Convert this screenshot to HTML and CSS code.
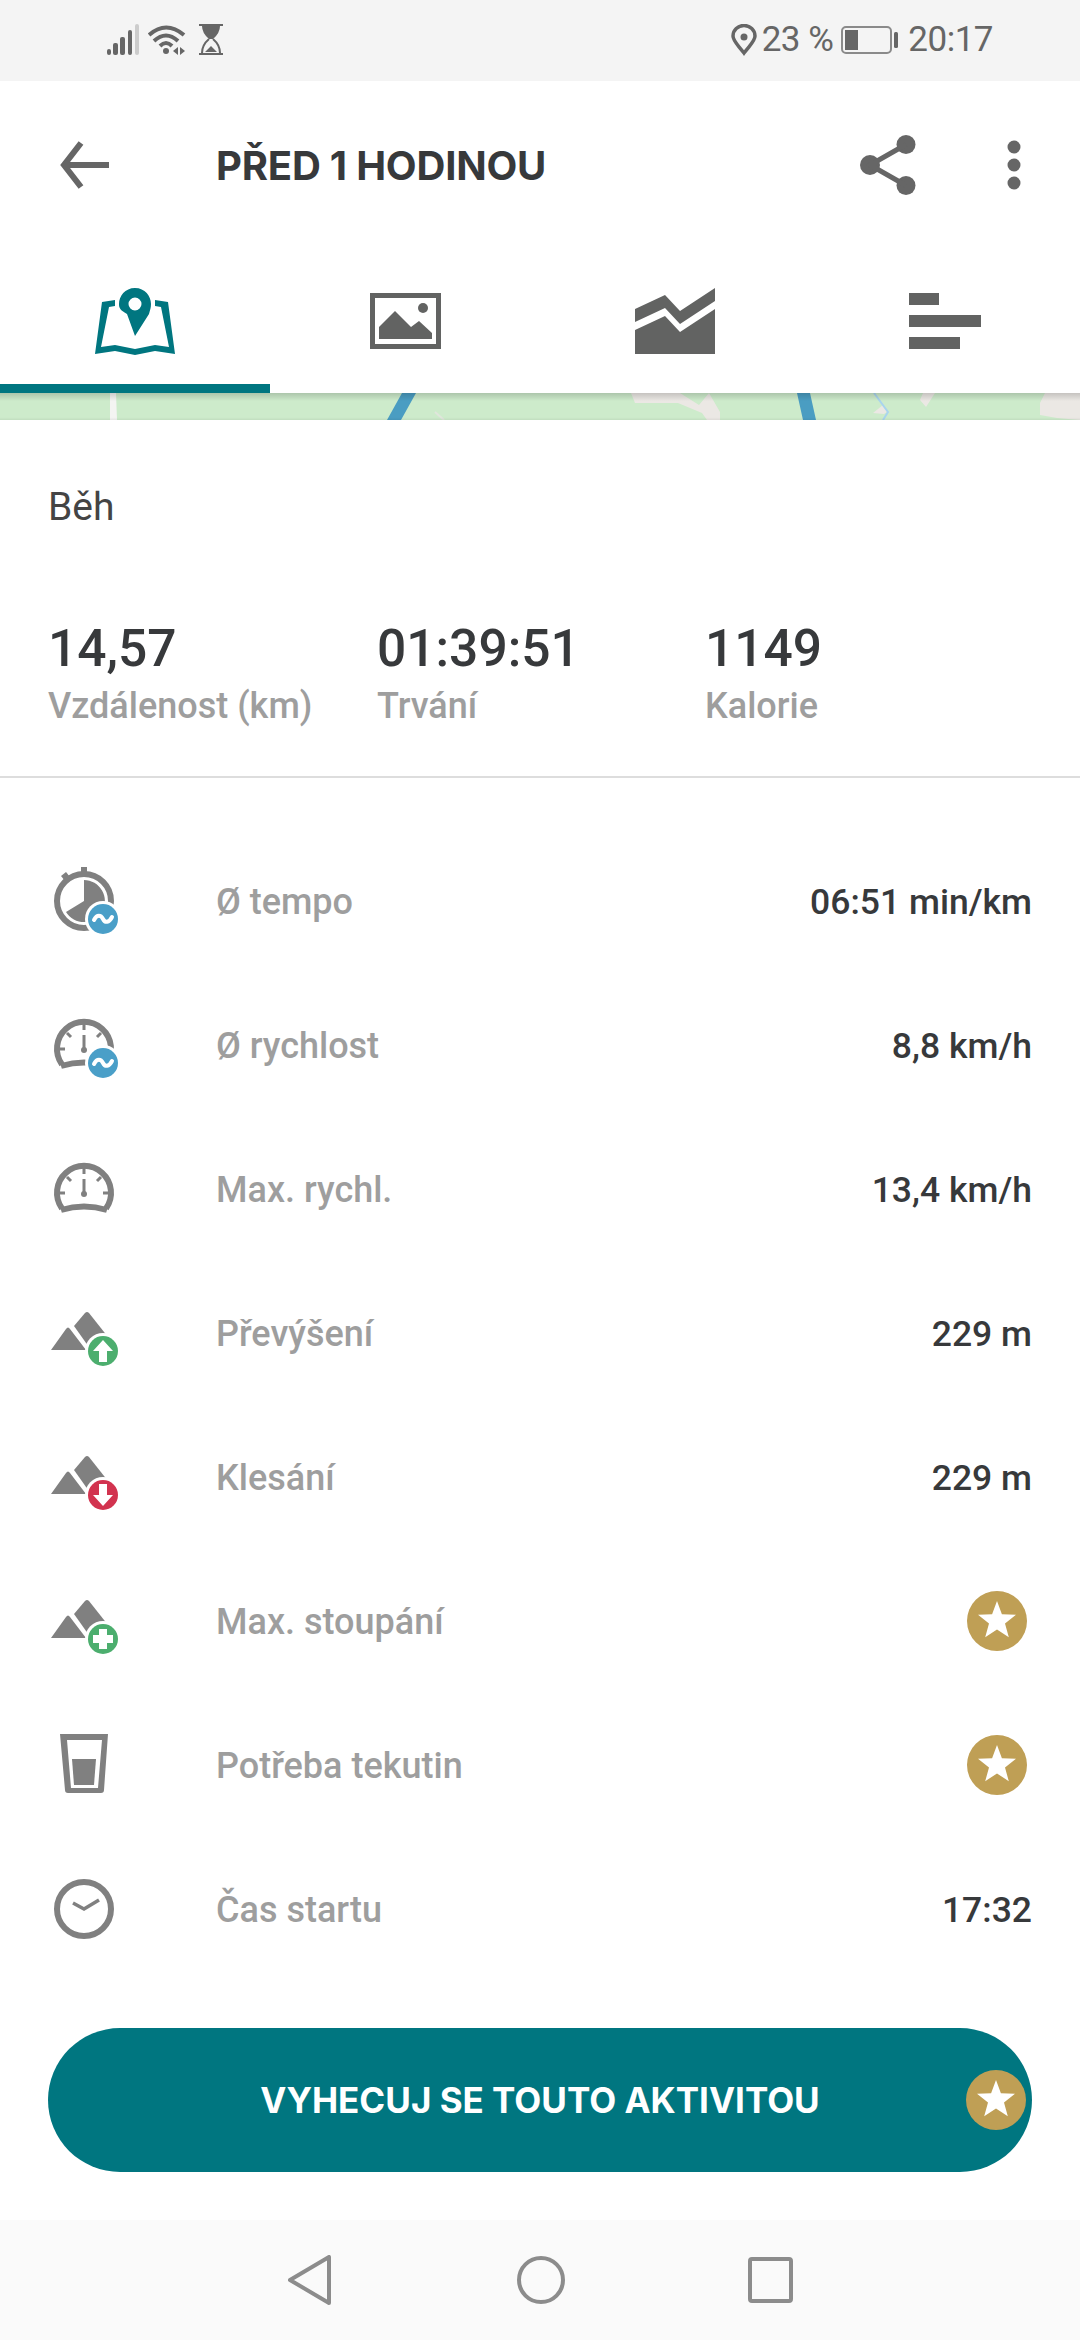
FILE: index.html
```html
<!DOCTYPE html>
<html lang="cs">
<head>
  <meta charset="UTF-8" />
  <meta name="viewport" content="width=device-width, initial-scale=1" />
  <title>Před 1 hodinou</title>
  <link rel="stylesheet" href="styles.css">
</head>
<body>
<svg class="defs" width="0" height="0">
  <symbol id="star" viewBox="-30 -30 60 60">
    <circle r="30" fill="#bf9f55"/>
    <polygon fill="#fff" points="0,-20 4.9,-6.7 19,-6.2 8,2.6 11.8,16.2 0,8.4 -11.8,16.2 -8,2.6 -19,-6.2 -4.9,-6.7"/>
  </symbol>
  <symbol id="peaks" viewBox="0 0 72 72">
    <path fill="#808080" d="M3 53 L18 32 Q20 29 22 32 L38 53 Z"/>
    <path fill="#808080" d="M26 29 L37 16 Q39 14 41 16 L60 40 L43 53 Z"/>
  </symbol>
  <symbol id="gauge" viewBox="0 0 72 72">
    <g fill="none" stroke="#808080">
      <path stroke-width="6" d="M14 55.5 A27 27 0 1 1 58 55.5"/>
      <path stroke-width="6" d="M13 57 Q36 50 59 57"/>
      <path stroke-width="3" d="M36 15 V21 M12 40 H17 M55 40 H60 M19 24 L23 28 M53 24 L49 28 M36 26 V40"/>
    </g>
    <circle cx="36" cy="41" r="3" fill="#808080"/>
  </symbol>
  <symbol id="wave" viewBox="0 0 72 72">
    <circle cx="55" cy="54" r="18" fill="#fff"/>
    <circle cx="55" cy="54" r="15" fill="#4a9fc8"/>
    <path fill="none" stroke="#fff" stroke-width="4" stroke-linecap="round" d="M46 55 C49 49 53 50 55 54 S61 58 64 52"/>
  </symbol>
</svg>

<div class="status">
  <div class="status-left">
    <svg width="32" height="32" viewBox="0 0 32 32">
      <g fill="#666"><rect x="0" y="25" width="4" height="6" rx="2"/><rect x="6" y="19" width="5" height="12" rx="2"/><rect x="13" y="13" width="5" height="18" rx="2"/><rect x="21" y="6" width="4" height="25" rx="2"/></g>
      <rect x="28" y="0" width="4" height="31" rx="2" fill="#ccc"/>
    </svg>
    <svg width="38" height="32" viewBox="0 0 38 32">
      <g fill="none" stroke="#666" stroke-width="4">
        <path d="M1 11 Q18 -4 36 11"/>
        <path d="M6 17 Q18 6 30 17"/>
        <path d="M12 22 Q18 16 24 22"/>
      </g>
      <circle cx="18" cy="27" r="3" fill="#666"/>
      <path fill="#666" d="M25 27 L30 23 V31 Z M32 23 L37 27 L32 31 Z"/>
    </svg>
    <svg width="24" height="31" viewBox="0 0 24 31">
      <path fill="#666" d="M0 0 H24 V2 H21 Q21 9 14 15 H10 Q3 9 3 2 H0 Z M0 29 H24 V31 H0 Z M6 28 L12 22 L18 28 Z"/>
      <path fill="none" stroke="#666" stroke-width="2" d="M10 15 Q3 21 3 29 M14 15 Q21 21 21 29"/>
    </svg>
  </div>
  <div class="status-right">
    <svg class="pin" width="26" height="32" viewBox="0 0 26 32">
      <path fill="none" stroke="#666" stroke-width="3.5" d="M13 29 C7 21 2 17 2 12 A11 10.500 0 0 1 24 12 C24 17 19 21 13 29 Z"/>
      <circle cx="13" cy="13" r="3.500" fill="#666"/>
    </svg>
    <span class="status-text">23 %</span>
    <svg class="battery" width="57" height="28" viewBox="0 0 57 28">
      <rect x="1" y="1" width="49" height="26" rx="4" fill="none" stroke="#8a8a8a" stroke-width="2"/>
      <rect x="4" y="4" width="13" height="20" fill="#666"/>
      <rect x="53" y="6" width="4" height="16" rx="1.500" fill="#666"/>
    </svg>
    <span class="status-text">20:17</span>
  </div>
</div>

<header class="topbar">
  <svg class="back" width="50" height="50" viewBox="0 0 50 50">
    <path fill="none" stroke="#666" stroke-width="6" d="M49 25 H4 M21 3 L4 25 L21 47"/>
  </svg>
  <h1>PŘED 1 HODINOU</h1>
  <svg class="share" width="56" height="60" viewBox="0 0 56 60">
    <g fill="#666"><circle cx="10" cy="30" r="10"/><circle cx="46" cy="9.500" r="9.500"/><circle cx="46" cy="50.500" r="9.500"/></g>
    <path fill="none" stroke="#666" stroke-width="5" d="M46 9.500 L10 30 L46 50.500"/>
  </svg>
  <svg class="more" width="14" height="50" viewBox="0 0 14 50">
    <g fill="#666"><circle cx="7" cy="7" r="6.500"/><circle cx="7" cy="25" r="6.500"/><circle cx="7" cy="43" r="6.500"/></g>
  </svg>
</header>

<nav class="tabs">
  <div class="tab active">
    <svg width="80" height="67" viewBox="0 0 80 67">
      <path fill="#007680" d="M7 14 L20 12 V18 L14 19 L6 59 L20 57 L40 61 L60 57 L74 59 L66 19 L60 18 V12 L73 14 L80 66 L60 63 L40 67 L20 63 L0 66 Z"/>
      <path fill="#007680" fill-rule="evenodd" d="M40 0 C50 0 56 8 56 16 C56 20 55 22 54 26 L40 48 L32 26 C25 22 24 20 24 16 C24 8 30 0 40 0 Z M40 9.500 A6.500 6.500 0 1 0 40 22.500 A6.500 6.500 0 1 0 40 9.500 Z"/>
    </svg>
  </div>
  <div class="tab">
    <svg width="71" height="56" viewBox="0 0 71 56">
      <path fill="#626362" fill-rule="evenodd" d="M0 0 H71 V56 H0 Z M5 5 V51 H66 V5 Z"/>
      <path fill="#626362" d="M9 34 L25 18 L41 34 L49 28 L62 40 V46 H9 Z"/>
      <circle cx="53" cy="15" r="5" fill="#626362"/>
    </svg>
  </div>
  <div class="tab">
    <svg width="80" height="66" viewBox="0 0 80 66">
      <path fill="#626362" d="M0 21 L30 7 L45 23 L80 0 V13 L45 36 L30 20 L0 34 Z"/>
      <path fill="#626362" d="M0 42 L30 28 L45 44 L80 21 V66 H0 Z"/>
    </svg>
  </div>
  <div class="tab">
    <svg width="72" height="56" viewBox="0 0 72 56">
      <g fill="#626362"><rect width="30" height="12"/><rect y="22" width="72" height="12"/><rect y="44" width="51" height="12"/></g>
    </svg>
  </div>
</nav>

<svg class="map" width="1080" height="27" viewBox="0 0 1080 27">
  <defs>
    <linearGradient id="mapShade" x1="0" y1="0" x2="0" y2="1">
      <stop offset="0" stop-color="#000" stop-opacity=".16"/>
      <stop offset=".3" stop-color="#000" stop-opacity="0"/>
      <stop offset=".9" stop-color="#000" stop-opacity="0"/>
      <stop offset="1" stop-color="#000" stop-opacity=".06"/>
    </linearGradient>
  </defs>
  <rect width="1080" height="27" fill="#cdebcb"/>
  <path fill="#f4f4f2" d="M110 0 H116 L117 27 H110 Z"/>
  <path fill="#ebe8e4" d="M631 0 H680 L699 12 L709 0 L720 19 V27 H707 L702 20 L678 10 H635 Z"/>
  <path fill="#ebe8e4" d="M923 0 H935 L926 14 L920 7 Z M873 20 L883 12 L887 19 L884 21 Z M1045 0 H1080 V27 L1057 25 L1040 22 V10 Z"/>
  <path fill="none" stroke="#e0e6dc" stroke-width="2" d="M435 19 L444 27"/>
  <path fill="none" stroke="#a9d4ee" stroke-width="2" d="M874 0 L888 19 L883 27"/>
  <path fill="#4a9dc2" d="M402 0 H416 L401 27 H387 Z M797 0 H810 L816 27 H803 Z"/>
  <rect width="1080" height="27" fill="url(#mapShade)"/>
</svg>

<section class="summary">
  <div class="sport">Běh</div>
  <div class="stats">
    <div><div class="stat-value">14,57</div><div class="stat-label">Vzdálenost (km)</div></div>
    <div><div class="stat-value">01:39:51</div><div class="stat-label">Trvání</div></div>
    <div><div class="stat-value">1149</div><div class="stat-label">Kalorie</div></div>
  </div>
</section>

<section class="rows">
  <div class="row">
    <svg class="row-icon" viewBox="0 0 72 72">
      <circle cx="36" cy="36" r="27" fill="none" stroke="#808080" stroke-width="6"/>
      <rect x="33" y="2" width="6" height="7" fill="#808080"/>
      <path d="M13 11 L18 7 L22 12 L17 16 Z" fill="#808080"/>
      <path d="M36 36 V15 A21 21 0 1 1 18 47 Z" fill="#808080"/>
      <use href="#wave" width="72" height="72"/>
    </svg>
    <span class="row-label">Ø tempo</span>
    <span class="row-value">06:51 min/km</span>
  </div>
  <div class="row">
    <svg class="row-icon" viewBox="0 0 72 72">
      <use href="#gauge" width="72" height="72"/>
      <use href="#wave" width="72" height="72"/>
    </svg>
    <span class="row-label">Ø rychlost</span>
    <span class="row-value">8,8 km/h</span>
  </div>
  <div class="row">
    <svg class="row-icon" viewBox="0 0 72 72"><use href="#gauge" width="72" height="72"/></svg>
    <span class="row-label">Max. rychl.</span>
    <span class="row-value">13,4 km/h</span>
  </div>
  <div class="row">
    <svg class="row-icon" viewBox="0 0 72 72">
      <use href="#peaks" width="72" height="72"/>
      <circle cx="55" cy="54" r="18" fill="#fff"/>
      <circle cx="55" cy="54" r="15" fill="#4cae6e"/>
      <path fill="#fff" d="M55 43 L65 54 H59 V65 H51 V54 H45 Z"/>
    </svg>
    <span class="row-label">Převýšení</span>
    <span class="row-value">229 m</span>
  </div>
  <div class="row">
    <svg class="row-icon" viewBox="0 0 72 72">
      <use href="#peaks" width="72" height="72"/>
      <circle cx="55" cy="54" r="18" fill="#fff"/>
      <circle cx="55" cy="54" r="15" fill="#d2334f"/>
      <path fill="#fff" d="M55 65 L65 54 H59 V43 H51 V54 H45 Z"/>
    </svg>
    <span class="row-label">Klesání</span>
    <span class="row-value">229 m</span>
  </div>
  <div class="row">
    <svg class="row-icon" viewBox="0 0 72 72">
      <use href="#peaks" width="72" height="72"/>
      <circle cx="55" cy="54" r="18" fill="#fff"/>
      <circle cx="55" cy="54" r="15" fill="#4cae6e"/>
      <path fill="#fff" d="M51 44 H59 V50 H65 V58 H59 V64 H51 V58 H45 V50 H51 Z"/>
    </svg>
    <span class="row-label">Max. stoupání</span>
    <svg class="star" viewBox="0 0 60 60"><use href="#star" width="60" height="60"/></svg>
  </div>
  <div class="row">
    <svg class="row-icon" viewBox="0 0 72 72">
      <path fill="#808080" fill-rule="evenodd" d="M12 5 H60 L56 61 Q56 64 53 64 H20 Q17 64 17 61 Z M19 11 L23 59 H50 L54 11 Z"/>
      <path fill="#808080" d="M24 30 H48 L46 56 H26 Z"/>
    </svg>
    <span class="row-label">Potřeba tekutin</span>
    <svg class="star" viewBox="0 0 60 60"><use href="#star" width="60" height="60"/></svg>
  </div>
  <div class="row">
    <svg class="row-icon" viewBox="0 0 72 72">
      <circle cx="36" cy="36" r="27" fill="none" stroke="#808080" stroke-width="6"/>
      <path fill="none" stroke="#808080" stroke-width="3.500" d="M25 30 L36 36 L51 27"/>
    </svg>
    <span class="row-label">Čas startu</span>
    <span class="row-value">17:32</span>
  </div>
</section>

<button class="challenge">
  VYHECUJ SE TOUTO AKTIVITOU
  <svg class="star challenge-star" viewBox="0 0 60 60"><use href="#star" width="60" height="60"/></svg>
</button>

<footer class="navbar">
  <svg width="43" height="50" viewBox="0 0 43 50">
    <path fill="none" stroke="#8c8c8c" stroke-width="4" stroke-linejoin="round" d="M41 2 V48 L2 25 Z"/>
  </svg>
  <svg width="48" height="48" viewBox="0 0 48 48">
    <circle cx="24" cy="24" r="22" fill="none" stroke="#8c8c8c" stroke-width="4"/>
  </svg>
  <svg class="navbar-recent" width="45" height="46" viewBox="0 0 45 46">
    <rect x="2" y="2" width="41" height="42" rx="2" fill="none" stroke="#8c8c8c" stroke-width="4"/>
  </svg>
</footer>
</body>
</html>
```

FILE: styles.css
```css
* { box-sizing: border-box; }
html, body { height: 100%; }
body {
  margin: 0;
  width: 1080px;
  height: 2340px;
  overflow: hidden;
  background: #fff;
  color: #37393b;
  font-family: Roboto, sans-serif;
}
svg { display: block; flex: none; }
.defs { position: absolute; }

.status {
  height: 81px;
  background: #f4f4f4;
  display: flex;
  justify-content: space-between;
  align-items: flex-start;
  padding: 24px 87px 0 107px;
}
.status-left {
  display: flex;
  align-items: flex-start;
  gap: 9px;
}
.status-left svg:last-child { margin-left: 4px; }
.status-right {
  display: flex;
  align-items: center;
  height: 32px;
  gap: 8px;
}
.status-text {
  font-size: 35px;
  color: #666;
  letter-spacing: -0.5px;
  line-height: 32px;
}
.pin { margin-right: -3px; }
.battery { margin: 0 2px 0 0; }

.topbar {
  height: 159px;
  display: flex;
  align-items: center;
  padding: 9px 59px 0 60px;
}
.topbar h1 {
  margin: 0 0 0 106px;
  flex: 1;
  font-family: Inter, sans-serif;
  font-size: 40px;
  font-weight: 700;
  color: #37393b;
  letter-spacing: -0.2px;
}
.more { margin-left: 91px; }

.tabs {
  height: 153px;
  display: flex;
}
.tab {
  width: 270px;
  padding-top: 18px;
  display: flex;
  justify-content: center;
  align-items: center;
  border-bottom: 9px solid transparent;
}
.tab.active { border-bottom-color: #007680; }

.summary {
  height: 358px;
  padding: 67px 48px 0;
  border-bottom: 2px solid #ddd;
}
.sport {
  font-size: 39px;
  line-height: 40px;
  color: #444;
}
.stats {
  margin-top: 92px;
  display: grid;
  grid-template-columns: 329px 328px 1fr;
}
.stat-value {
  font-size: 51.5px;
  font-weight: 500;
  line-height: 60px;
}
.stat-label {
  margin-top: 5px;
  font-size: 36px;
  font-weight: 500;
  line-height: 44px;
  color: #9e9e9e;
}

.rows { padding-top: 51px; }
.row {
  height: 144px;
  padding: 0 48px;
  display: flex;
  align-items: center;
}
.row-icon {
  width: 72px;
  height: 72px;
  margin-right: 96px;
}
.row-label {
  flex: 1;
  padding-top: 2px;
  font-size: 36px;
  font-weight: 500;
  color: #9e9e9e;
}
.row-value {
  padding-top: 2px;
  font-size: 35.5px;
  font-weight: 500;
  color: #37393b;
}
.star {
  width: 60px;
  height: 60px;
  margin-right: 5px;
}

.challenge {
  position: relative;
  display: block;
  width: 984px;
  height: 144px;
  margin: 47px 48px 0;
  border: none;
  border-radius: 72px;
  background: #007680;
  color: #fff;
  font-family: Inter, sans-serif;
  font-size: 35px;
  font-weight: 700;
  letter-spacing: 0;
}
.challenge-star {
  position: absolute;
  right: 6px;
  top: 42px;
  margin: 0;
}

.navbar {
  height: 120px;
  margin-top: 48px;
  background: #fafafa;
  display: flex;
  align-items: center;
  justify-content: center;
  gap: 186px;
}
.navbar-recent { margin-left: -3px; }
```
